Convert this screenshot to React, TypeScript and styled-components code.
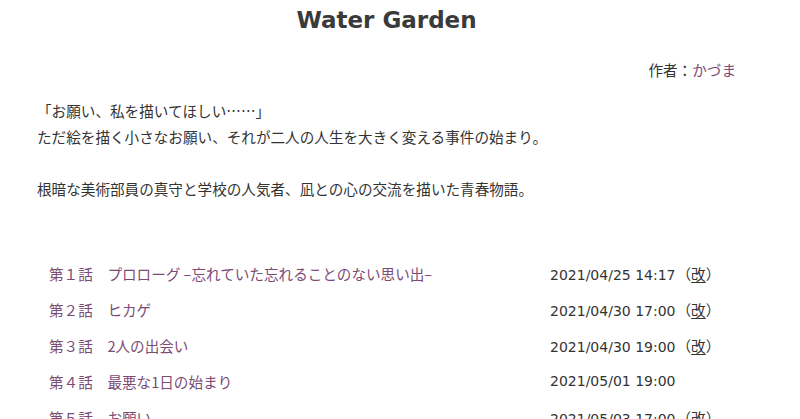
import React from 'react';
import styled, { createGlobalStyle } from 'styled-components';

const GlobalStyle = createGlobalStyle`
  body {
    margin: 0;
    background: #fff;
    color: #333;
    font-family: "Noto Sans CJK JP", "DejaVu Sans", sans-serif;
  }
`;

const Page = styled.div`
  box-sizing: border-box;
  width: 800px;
  padding: 0 64px 0 37px;
  overflow: hidden;
  height: 419px;
`;

const Title = styled.h1`
  margin: 0;
  text-align: center;
  font-family: "DejaVu Sans", sans-serif;
  font-weight: bold;
  font-size: 23px;
  line-height: 40px;
  color: #3a3a3a;
`;

const Author = styled.div`
  margin-top: 17px;
  text-align: right;
  font-size: 14.6px;
  line-height: 26px;
`;

const Link = styled.a`
  color: #7b4b75;
  text-decoration: none;
`;

const Synopsis = styled.div`
  margin-top: 15px;
  font-size: 14.6px;
  line-height: 26px;
  white-space: pre-wrap;
`;

const EpisodeList = styled.div`
  margin-top: 53px;
`;

const Row = styled.div`
  display: grid;
  grid-template-columns: 513px 1fr;
  height: 36px;
  align-items: center;
  font-size: 14.6px;
`;

const Subtitle = styled(Link)`
  padding-left: 12px;
  white-space: nowrap;
`;

const Update = styled.div`
  font-family: "DejaVu Sans", sans-serif;
  font-size: 14px;
  white-space: nowrap;
  color: #333;
`;

const Revised = styled.span`
  font-family: "Noto Sans CJK JP", sans-serif;
  font-size: 14.6px;
  margin-left: 1px;

  u {
    text-decoration: underline;
    text-underline-offset: 2px;
  }
`;

const episodes = [
  { title: '第１話　プロローグ –忘れていた忘れることのない思い出–', date: '2021/04/25 14:17', revised: true },
  { title: '第２話　ヒカゲ', date: '2021/04/30 17:00', revised: true },
  { title: '第３話　2人の出会い', date: '2021/04/30 19:00', revised: true },
  { title: '第４話　最悪な1日の始まり', date: '2021/05/01 19:00', revised: false },
  { title: '第５話　お願い', date: '2021/05/03 17:00', revised: true },
];

export default function App() {
  return (
    <>
      <GlobalStyle />
      <Page>
        <Title>Water Garden</Title>
        <Author>
          作者：<Link href="#">かづま</Link>
        </Author>
        <Synopsis>
          {'「お願い、私を描いてほしい……」\nただ絵を描く小さなお願い、それが二人の人生を大きく変える事件の始まり。\n\n根暗な美術部員の真守と学校の人気者、凪との心の交流を描いた青春物語。'}
        </Synopsis>
        <EpisodeList>
          {episodes.map(ep => (
            <Row key={ep.title}>
              <Subtitle href="#">{ep.title}</Subtitle>
              <Update>
                {ep.date}
                {ep.revised && (
                  <Revised>
                    （<u>改</u>）
                  </Revised>
                )}
              </Update>
            </Row>
          ))}
        </EpisodeList>
      </Page>
    </>
  );
}
